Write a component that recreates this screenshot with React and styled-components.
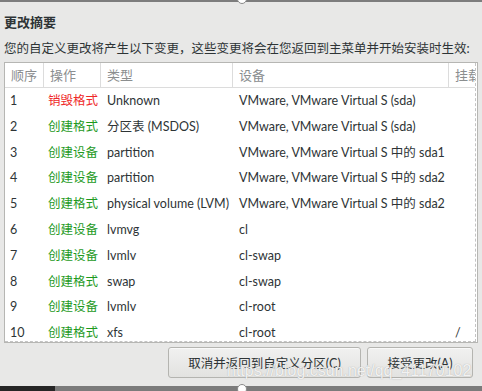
import styled, { createGlobalStyle } from 'styled-components';

const GlobalStyle = createGlobalStyle`
  html, body {
    margin: 0;
    padding: 0;
    background: #e8e8e7;
  }
  body {
    font-family: Lato, "Noto Sans CJK SC", sans-serif;
  }
`;

const Window = styled.div`
  position: relative;
  width: 482px;
  height: 391px;
  overflow: hidden;
  background: #e8e8e7;
  display: flex;
  flex-direction: column;
`;

const TopEdge = styled.div`
  height: 2px;
  background: #7d7d7d;
  flex-shrink: 0;
`;

const BottomEdge = styled.div`
  margin-top: auto;
  height: 5px;
  background: linear-gradient(to right, #262626 0, #262626 55px, #7b7b7b 55px);
  flex-shrink: 0;
`;

const Knob = styled.div`
  position: absolute;
  left: 237px;
  width: 10px;
  height: 10px;
  border-radius: 50%;
  background: #fff;
  border: 1px solid #8a8a8a;
  box-sizing: border-box;
  top: ${(p) => (p.$bottom ? '384px' : '-6px')};
`;

const Content = styled.div`
  padding: 12px 4px 0 4px;
  display: flex;
  flex-direction: column;
`;

const Title = styled.h2`
  margin: 0;
  font-size: 13px;
  font-weight: 700;
  color: #2e3436;
  line-height: 16px;
`;

const Description = styled.p`
  margin: 11px 0 5px 0;
  font-size: 12.5px;
  color: #2e3436;
  line-height: 16px;
  white-space: nowrap;
`;

const TableBox = styled.div`
  width: 474px;
  height: 281px;
  box-sizing: border-box;
  border: 1px solid #b6b6b3;
  background: #fff;
  overflow: hidden;
`;

const TableInner = styled.div`
  width: 470px;
  height: 278px;
  border-right: 1px dashed #c4c4c4;
  border-bottom: 1px dashed #c4c4c4;
  overflow: hidden;
`;

const Grid = styled.div`
  display: grid;
  grid-template-columns: 39px 57px 132px 216px 60px;
  width: 504px;
`;

const HeadCell = styled.div`
  height: 24px;
  line-height: 24px;
  padding-left: ${(p) => p.$pad || 6}px;
  font-size: 13px;
  color: #8b8e8f;
  border-right: 1px solid #dcdcdc;
  border-bottom: 1px solid #dcdcdc;
  white-space: nowrap;
  overflow: hidden;
`;

const Cell = styled.div`
  height: 25.8px;
  line-height: 25.8px;
  padding-left: ${(p) => p.$pad || 6}px;
  font-size: 12.5px;
  color: ${(p) => p.$color || '#2e3436'};
  white-space: nowrap;
  overflow: hidden;
`;

const ButtonRow = styled.div`
  display: flex;
  justify-content: flex-end;
  gap: 6px;
  padding: 4px 5px 0 0;
`;

const Button = styled.button`
  height: 31px;
  padding: 0;
  width: ${(p) => p.$w}px;
  border: 1px solid #b4b4b0;
  border-radius: 3px;
  background: linear-gradient(to bottom, #f1f1f0, #e2e2e0);
  font-family: Lato, "Noto Sans CJK SC", sans-serif;
  font-size: 12.5px;
  color: #2e3436;
  box-shadow: 0 1px 0 rgba(255, 255, 255, 0.6) inset;
`;

const Watermark = styled.div`
  position: absolute;
  left: 227px;
  top: 362px;
  font-family: "Liberation Sans", Arial, sans-serif;
  font-size: 16px;
  color: rgba(255, 255, 255, 0.85);
  text-shadow: 0 0 1px rgba(120, 120, 120, 0.6);
  white-space: nowrap;
  pointer-events: none;
`;

const RED = '#ef2929';
const GREEN = '#1e9a1e';

const rows = [
  ['1', '销毁格式', RED, 'Unknown', 'VMware, VMware Virtual S (sda)', ''],
  ['2', '创建格式', GREEN, '分区表 (MSDOS)', 'VMware, VMware Virtual S (sda)', ''],
  ['3', '创建设备', GREEN, 'partition', 'VMware, VMware Virtual S 中的 sda1', ''],
  ['4', '创建设备', GREEN, 'partition', 'VMware, VMware Virtual S 中的 sda2', ''],
  ['5', '创建格式', GREEN, 'physical volume (LVM)', 'VMware, VMware Virtual S 中的 sda2', ''],
  ['6', '创建设备', GREEN, 'lvmvg', 'cl', ''],
  ['7', '创建设备', GREEN, 'lvmlv', 'cl-swap', ''],
  ['8', '创建格式', GREEN, 'swap', 'cl-swap', ''],
  ['9', '创建设备', GREEN, 'lvmlv', 'cl-root', ''],
  ['10', '创建格式', GREEN, 'xfs', 'cl-root', '/'],
];

export default function App() {
  return (
    <Window>
      <GlobalStyle />
      <TopEdge />
      <Knob />
      <Content>
        <Title>更改摘要</Title>
        <Description>
          您的自定义更改将产生以下变更，这些变更将会在您返回到主菜单并开始安装时生效:
        </Description>
        <TableBox>
          <TableInner>
            <Grid>
              <HeadCell $pad={6}>顺序</HeadCell>
              <HeadCell>操作</HeadCell>
              <HeadCell>类型</HeadCell>
              <HeadCell>设备</HeadCell>
              <HeadCell>挂载点</HeadCell>
              {rows.map(([n, op, color, type, dev, mount]) => [
                <Cell key={n + 'n'} $pad={5}>{n}</Cell>,
                <Cell key={n + 'o'} $pad={4} $color={color}>{op}</Cell>,
                <Cell key={n + 't'}>{type}</Cell>,
                <Cell key={n + 'd'}>{dev}</Cell>,
                <Cell key={n + 'm'} $pad={0}>{mount}</Cell>,
              ])}
            </Grid>
          </TableInner>
        </TableBox>
        <ButtonRow>
          <Button $w={193}>取消并返回到自定义分区(C)</Button>
          <Button $w={106}>接受更改(A)</Button>
        </ButtonRow>
      </Content>
      <BottomEdge />
      <Knob $bottom />
      <Watermark>https://blog.csdn.net/qq_41170102</Watermark>
    </Window>
  );
}
